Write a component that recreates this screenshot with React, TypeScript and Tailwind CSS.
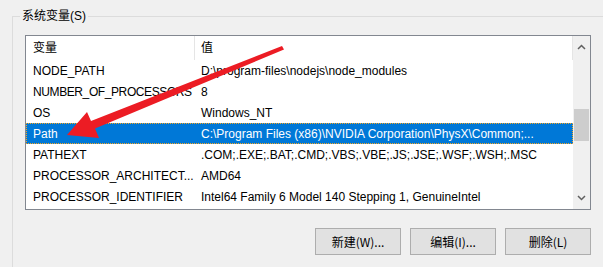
const rows = [
  { name: "NODE_PATH", value: "D:\\program-files\\nodejs\\node_modules" },
  { name: "NUMBER_OF_PROCESSORS", value: "8", tight: true },
  { name: "OS", value: "Windows_NT" },
  { name: "Path", value: "C:\\Program Files (x86)\\NVIDIA Corporation\\PhysX\\Common;...", selected: true },
  { name: "PATHEXT", value: ".COM;.EXE;.BAT;.CMD;.VBS;.VBE;.JS;.JSE;.WSF;.WSH;.MSC" },
  { name: "PROCESSOR_ARCHITECT...", value: "AMD64" },
  { name: "PROCESSOR_IDENTIFIER", value: "Intel64 Family 6 Model 140 Stepping 1, GenuineIntel" },
];

function Chevron({ down }: { down?: boolean }) {
  return (
    <svg width="9" height="6" viewBox="0 0 9 6" className={down ? "rotate-180" : ""}>
      <path d="M1 5 L4.5 1.5 L8 5" fill="none" stroke="#606060" strokeWidth="1.5" />
    </svg>
  );
}

export default function App() {
  return (
    <div className="relative w-[603px] h-[267px] overflow-hidden bg-[#f0f0f0] text-[12px] text-black font-['Liberation_Sans','Noto_Sans_CJK_SC',sans-serif]">
      {/* group box */}
      <div className="relative ml-[12px] mt-[16px] w-[640px] h-[300px] border-l border-t border-[#dcdcdc] pl-[12px] pt-[18px]">
        <span className="absolute -top-[9px] left-[7px] bg-[#f0f0f0] px-[2px] leading-[16px]">系统变量(S)</span>

        {/* list */}
        <div className="flex w-[566px] h-[175px] border border-[#828790] bg-white">
          <div className="flex-1 flex flex-col">
            <div className="flex h-[24px] items-center shrink-0">
              <div className="w-[169px] h-full pl-[7px] flex items-center border-r border-[#e5e5e5]">变量</div>
              <div className="flex-1 h-full pl-[6px] flex items-center border-r border-[#e5e5e5]">值</div>
            </div>
            {rows.map((r) => (
              <div
                key={r.name}
                className={
                  r.selected
                    ? "flex h-[21px] items-center shrink-0 bg-[#0078d7] text-white outline-1 outline-dotted outline-[#f5a623] -outline-offset-1"
                    : "flex h-[21px] items-center shrink-0"
                }
              >
                <div
                  className={
                    r.tight
                      ? "w-[169px] pl-[7px] overflow-hidden whitespace-nowrap tracking-[-0.4px]"
                      : "w-[169px] pl-[7px] pr-[2px] overflow-hidden whitespace-nowrap"
                  }
                >
                  {r.name}
                </div>
                <div className="flex-1 pl-[6px] overflow-hidden whitespace-nowrap">{r.value}</div>
              </div>
            ))}
          </div>
          {/* scrollbar */}
          <div className="w-[17px] bg-[#f0f0f0] flex flex-col items-center">
            <div className="h-[20px] flex items-center justify-center pt-[2px]">
              <Chevron />
            </div>
            <div className="h-[53px]" />
            <div className="w-[15px] h-[32px] bg-[#cdcdcd] mr-[1px]" />
            <div className="flex-1" />
            <div className="h-[20px] flex items-center justify-center pb-[2px]">
              <Chevron down />
            </div>
          </div>
        </div>

        {/* buttons */}
        <div className="flex w-[566px] justify-end gap-[9px] mt-[18px] font-['Noto_Sans_CJK_SC',sans-serif]">
          {["新建(W)...", "编辑(I)...", "删除(L)"].map((b) => (
            <button
              key={b}
              className="w-[86px] h-[27px] bg-[#e1e1e1] border border-[#adadad] text-[12px] flex items-center justify-center"
            >
              {b}
            </button>
          ))}
        </div>
      </div>

      {/* red annotation arrow */}
      <svg className="absolute inset-0 pointer-events-none" width="603" height="267" viewBox="0 0 603 267">
        <polygon
          points="67,135 87,112 91,121 282,46 284,49.5 95,128.5 99,138"
          fill="#ec1c24"
        />
      </svg>
    </div>
  );
}
